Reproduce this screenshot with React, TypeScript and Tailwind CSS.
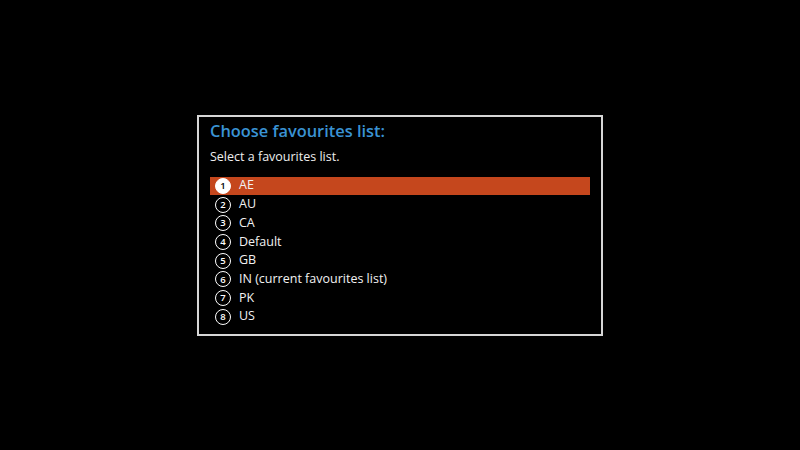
const items = ['AE', 'AU', 'CA', 'Default', 'GB', 'IN (current favourites list)', 'PK', 'US']

function NumCircle({ n, active }: { n: number; active: boolean }) {
  return (
    <span
      className={
        'flex h-[16px] w-[16px] shrink-0 items-center justify-center rounded-full border-[1.3px] text-[9.5px] font-semibold leading-none ' +
        (active ? 'border-white bg-white text-black' : 'border-white text-white')
      }
    >
      {n}
    </span>
  )
}

export default function App() {
  return (
    <div
      className="flex h-[450px] w-[800px] items-center justify-center bg-black"
      style={{ fontFamily: '"Open Sans", "Noto Sans", sans-serif' }}
    >
      <div className="flex h-[221px] w-[406px] flex-col border-2 border-[#d6d6d6] px-[11px] pt-[3px]">
        <div className="text-[16.4px] font-semibold leading-[22px] text-[#3a93d4]">Choose favourites list:</div>
        <div className="mt-[6px] text-[12.5px] leading-[18px] text-[#eeeeee]">Select a favourites list.</div>
        <div className="mt-[11px] flex flex-col">
          {items.map((label, i) => (
            <div
              key={label}
              className={
                'flex h-[18.7px] items-center gap-[8px] pl-[5px] text-[12.5px] text-[#f2f2f2] ' +
                (i === 0 ? 'bg-[#c5471d]' : '')
              }
            >
              <NumCircle n={i + 1} active={i === 0} />
              <span>{label}</span>
            </div>
          ))}
        </div>
      </div>
    </div>
  )
}
